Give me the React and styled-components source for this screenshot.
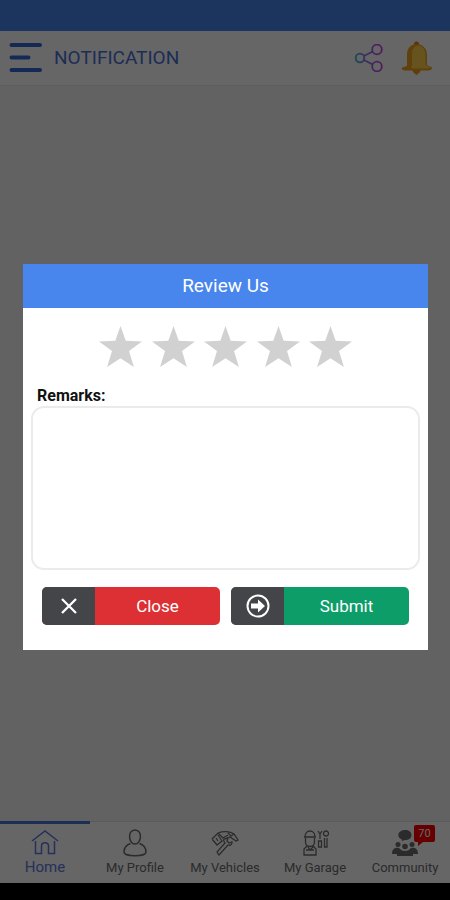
import React from "react";
import styled, { createGlobalStyle } from "styled-components";

const GlobalStyle = createGlobalStyle`
    * {
        box-sizing: border-box;
    }

    body {
        margin: 0;
        background: #000;
        font-family: Roboto, sans-serif;
    }

    button, textarea {
        font-family: inherit;
    }
`;

const Screen = styled.div`
    display: flex;
    flex-direction: column;
    min-height: 100vh;
`;

const StatusBar = styled.div`
    height: 31px;
    background: #4885ed;
`;

const Header = styled.header`
    display: flex;
    align-items: center;
    height: 55px;
    padding: 0 17px 0 9px;
    background: #fff;
    border-bottom: 1px solid #ececec;
`;

const PageTitle = styled.h1`
    flex: 1;
    margin: 0 0 0 11px;
    font-size: 19px;
    font-weight: 400;
    line-height: 24px;
    color: #4870d8;
`;

const IconButton = styled.button`
    display: flex;
    padding: 0;
    border: 0;
    background: none;
    margin-left: ${(props) => props.$gap || 0}px;
`;

const Content = styled.main`
    flex: 1;
    background: #f6f6f6;
`;

const TabBar = styled.nav`
    display: grid;
    grid-template-columns: repeat(5, 1fr);
    background: #fff;
`;

const Tab = styled.a`
    display: flex;
    flex-direction: column;
    align-items: center;
    height: 62px;
    border-top: ${(props) => (props.$active ? "3px solid #4870d8" : "1px solid #e4e4e4")};
    padding-top: ${(props) => (props.$active ? 3 : 6)}px;
    color: ${(props) => (props.$active ? "#5c7ae0" : "#6c6c6c")};
    font-size: ${(props) => (props.$active ? 15 : 13)}px;
    line-height: 20px;
    text-decoration: none;
    white-space: nowrap;
`;

const TabIcon = styled.span`
    position: relative;
    display: flex;
    height: 30px;
    align-items: center;
`;

const Badge = styled.span`
    position: absolute;
    left: 22px;
    top: -3px;
    width: 21px;
    height: 17px;
    border-radius: 2px;
    background: #ff0000;
    color: #fff;
    font-size: 11px;
    line-height: 17px;
    text-align: center;

    &::after {
        content: "";
        position: absolute;
        left: 4px;
        top: 17px;
        border-top: 4px solid #ff0000;
        border-right: 5px solid transparent;
    }
`;

const NavigationArea = styled.div`
    height: 17px;
    background: #000;
`;

const Overlay = styled.div`
    position: fixed;
    inset: 0;
    display: flex;
    align-items: center;
    padding: 14px 22px 0 23px;
    background: rgba(0, 0, 0, 0.6);
`;

const Dialog = styled.form`
    width: 100%;
    background: #fff;
`;

const DialogTitle = styled.h2`
    margin: 0;
    background: #4885ed;
    color: #fff;
    font-size: 19px;
    font-weight: 400;
    line-height: 44px;
    text-align: center;
`;

const DialogBody = styled.div`
    display: flex;
    flex-direction: column;
    padding: 18px 8px 25px;
`;

const Stars = styled.div`
    display: flex;
    align-self: center;
    justify-content: space-between;
    width: 253px;
`;

const Label = styled.label`
    margin: 19px 0 0 6px;
    font-size: 16px;
    font-weight: 700;
    line-height: 20px;
    color: #111;
`;

const Remarks = styled.textarea`
    height: 164px;
    padding: 12px;
    border: 2px solid #ebebeb;
    border-radius: 13px;
    font-size: 16px;
    resize: none;
    outline: none;
`;

const Actions = styled.div`
    display: flex;
    gap: 11px;
    margin-top: 17px;
    padding: 0 11px;
`;

const ActionButton = styled.button`
    flex: 1;
    display: flex;
    height: 38px;
    padding: 0;
    border: 0;
    border-radius: 5px;
    overflow: hidden;
    background: ${(props) => props.$color};
    color: #fff;
    font-size: 17px;
    line-height: 38px;
`;

const ActionIcon = styled.span`
    display: flex;
    align-items: center;
    justify-content: center;
    width: 53px;
    height: 38px;
    background: #434548;
`;

const ActionText = styled.span`
    flex: 1;
`;

const MenuIcon = () => (
    <svg width="34" height="32" viewBox="0 0 34 32" stroke="#3268d8" strokeWidth="4" strokeLinecap="round">
        <path d="M2.500 3H31M2.500 15.500H19.500M2.500 28H31" />
    </svg>
);

const ShareIcon = () => (
    <svg width="28" height="28" viewBox="0 0 28 28" fill="none" stroke="url(#share)" strokeWidth="1.800">
        <defs>
            <linearGradient id="share" gradientUnits="userSpaceOnUse" x1="0" y1="14" x2="28" y2="14">
                <stop offset="0" stopColor="#38b8d8" />
                <stop offset="0.400" stopColor="#8878e8" />
                <stop offset="1" stopColor="#d83cf0" />
            </linearGradient>
        </defs>
        <circle cx="5" cy="14" r="4.300" />
        <circle cx="22" cy="5.500" r="4.800" />
        <circle cx="22" cy="22.500" r="4.800" />
        <path d="M8.800 12l9-4.500M8.800 16l9 4.500" />
    </svg>
);

const BellIcon = () => (
    <svg width="32" height="34" viewBox="0 0 32 34">
        <circle cx="15.500" cy="3" r="2.500" fill="#f07818" />
        <path d="M10.500 28h10l-2 3.500-3 2.500-3-2.500z" fill="#f09a10" />
        <path d="M6 25V14C6 7 10 3 15.500 3S26 7 26 14v10l5 2.500c.5 2-2 3-4 3H5c-3 0-5-1-4-3z" fill="#f0a01c" />
        <path d="M11 24V13c0-5 2.500-8.500 6-8.500 5 0 7.500 4.500 7.500 10V24l4.500 2c0 1-3 1.500-5 1.500H12l-2-1z" fill="#ffd04c" />
    </svg>
);

const StarIcon = () => (
    <svg width="43" height="41" viewBox="0 0 43 41" fill="#d1d1d1">
        <path d="M21.500 0l5.200 14.800 16.300.6-13 9.600 4.900 16-13.400-8.800L8.100 41 13 25 0 15.400l16.300-.6z" />
    </svg>
);

const CloseIcon = () => (
    <svg width="16" height="16" viewBox="0 0 16 16" stroke="#fff" strokeWidth="2.300">
        <path d="M1 1l14 14M15 1L1 15" />
    </svg>
);

const ArrowIcon = () => (
    <svg width="24" height="24" viewBox="0 0 24 24">
        <circle cx="12" cy="12" r="10.500" fill="none" stroke="#fff" strokeWidth="2" />
        <path d="M5 9.500h7V5.500l7 6.500-7 6.500v-4H5z" fill="#fff" />
    </svg>
);

const HomeIcon = () => (
    <svg width="28" height="26" viewBox="0 0 28 26" fill="none" stroke="currentColor" strokeWidth="1.500">
        <path d="M1 12L14 2l13 10M4.500 12v12.500h6V17c0-4.500 7-4.500 7 0v7.500h6V12" />
    </svg>
);

const ProfileIcon = () => (
    <svg width="24" height="28" viewBox="0 0 24 28" fill="none" stroke="currentColor" strokeWidth="1.500">
        <path d="M12 1c8 0 6.500 14 0 14S4 1 12 1z" />
        <path d="M7.500 14.500C3 16 1 19 1 23c0 5 22 5 22 0 0-4-2-7-6.500-8.500" />
    </svg>
);

const VehiclesIcon = () => (
    <svg width="28" height="26" viewBox="0 0 28 26" fill="none" stroke="currentColor" strokeWidth="1.300">
        <path d="M1 9l6-6c5-2 12-2 16 1l4 6-2 1-6-4-3 1M1 9l5 6 5-4-4-6M7 3l5 5 5-3M5 8l2 3" />
        <path d="M13 9c-1 2 0 3 1 4l-8 9 2 3 9-10c3 1 4-1 4-3l-3 1-2-2 1-3zM17 3l3 3 3-2" />
    </svg>
);

const GarageIcon = () => (
    <svg width="27" height="28" viewBox="0 0 27 28" fill="none" stroke="currentColor" strokeWidth="1.300">
        <path d="M3 8c0-8 10-8 10 0M2 8h12M3.500 9v4c0 6 9 6 9 0V9M5 17l-3 3v6h12v-6l-3-3M4 21h8M6 18l2 3 3-3" />
        <path d="M16 2l2 3 2-3M18 5v5M16.500 12h3v6h-3zM24 2a2.500 2.500 0 1 1 0 5 2.500 2.500 0 0 1 0-5M22.500 9v9h2.500V9" />
    </svg>
);

const CommunityIcon = () => (
    <svg width="26" height="28" viewBox="0 0 26 28" fill="currentColor">
        <path d="M13 1c4 0 6.500 2 6.500 5S17 11 13 11l-3 1-.5-1.800C4 8 6 1 13 1z" />
        <circle cx="6" cy="15.500" r="2.500" />
        <circle cx="20" cy="15.500" r="2.500" />
        <circle cx="13" cy="17.500" r="2.800" />
        <path d="M0 25c0-6 4-7 7-6 2 2 3 3 6 3s4-1 6-3c3-1 7 0 7 6h-5v2H5v-2z" />
    </svg>
);

const tabs = [
    { label: "Home", icon: HomeIcon, active: true },
    { label: "My Profile", icon: ProfileIcon },
    { label: "My Vehicles", icon: VehiclesIcon },
    { label: "My Garage", icon: GarageIcon },
    { label: "Community", icon: CommunityIcon, badge: 70 },
];

class ReviewPage extends React.Component {
    constructor(props) {
        super(props);
        this.state = {
            remarks: "",
        };
        this.handleRemarksChange = this.handleRemarksChange.bind(this);
    }

    //While user is typing in remarks
    handleRemarksChange(event) {
        this.setState({ remarks: event.target.value });
    }

    render() {
        return (
            <Screen>
                <GlobalStyle />
                <StatusBar />
                <Header>
                    <IconButton type="button" aria-label="Menu"><MenuIcon /></IconButton>
                    <PageTitle>NOTIFICATION</PageTitle>
                    <IconButton type="button" aria-label="Share"><ShareIcon /></IconButton>
                    <IconButton type="button" aria-label="Notifications" $gap={18}><BellIcon /></IconButton>
                </Header>
                <Content />
                <TabBar>
                    {tabs.map(({ label, icon: Icon, active, badge }) => (
                        <Tab key={label} href="#" $active={active}>
                            <TabIcon>
                                <Icon />
                                {badge && <Badge>{badge}</Badge>}
                            </TabIcon>
                            {label}
                        </Tab>
                    ))}
                </TabBar>
                <NavigationArea />
                <Overlay>
                    <Dialog onSubmit={(event) => event.preventDefault()}>
                        <DialogTitle>Review Us</DialogTitle>
                        <DialogBody>
                            <Stars>
                                {[1, 2, 3, 4, 5].map((n) => (
                                    <IconButton key={n} type="button" aria-label={n + " stars"}><StarIcon /></IconButton>
                                ))}
                            </Stars>
                            <Label htmlFor="remarks">Remarks:</Label>
                            <Remarks id="remarks" value={this.state.remarks} onChange={this.handleRemarksChange} />
                            <Actions>
                                <ActionButton type="button" $color="#dc3035">
                                    <ActionIcon><CloseIcon /></ActionIcon>
                                    <ActionText>Close</ActionText>
                                </ActionButton>
                                <ActionButton type="submit" $color="#0c9d68">
                                    <ActionIcon><ArrowIcon /></ActionIcon>
                                    <ActionText>Submit</ActionText>
                                </ActionButton>
                            </Actions>
                        </DialogBody>
                    </Dialog>
                </Overlay>
            </Screen>
        );
    }
}

export default ReviewPage;
